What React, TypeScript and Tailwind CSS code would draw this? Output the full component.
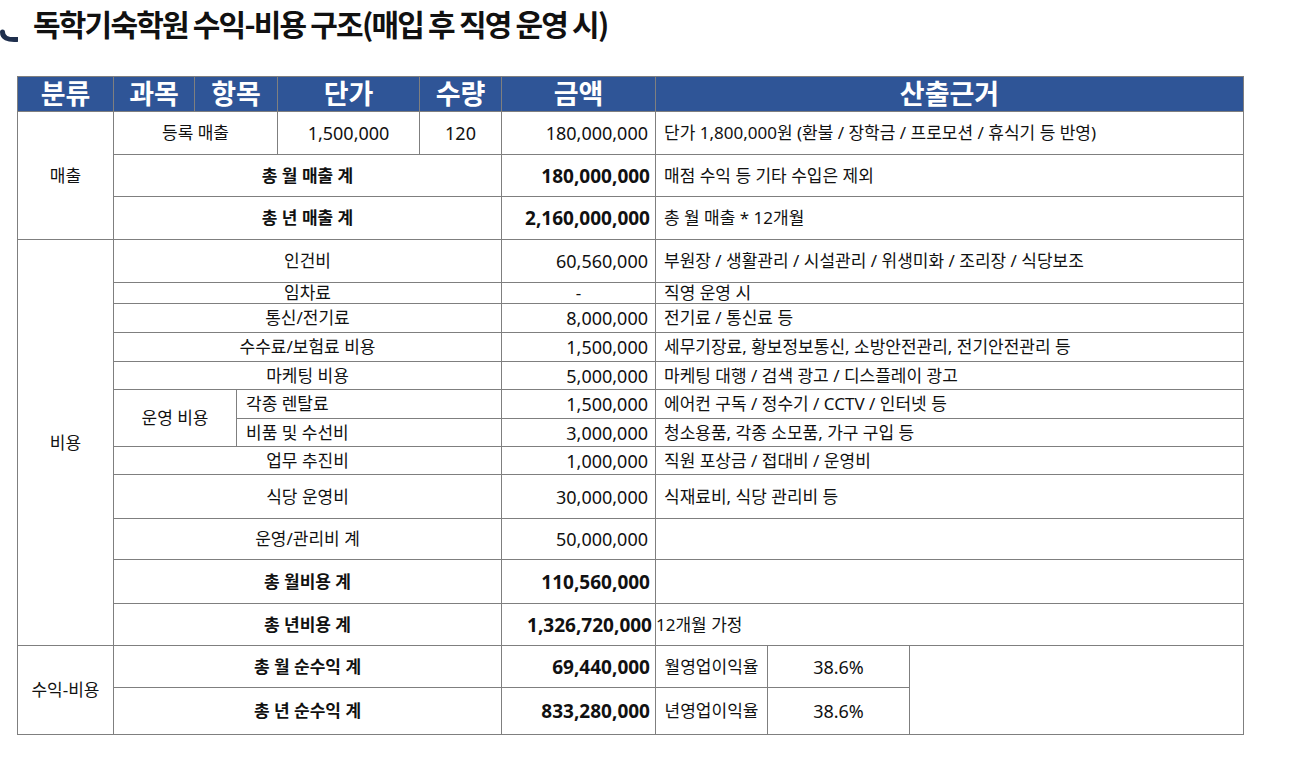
import React from "react";

const cell = "border border-[#7f7f7f] p-0";
const th = "border border-[#7f7f7f] bg-[#2f5597] text-white text-[27px] font-bold leading-[30px] text-center";
const amt = "text-right pr-[7px] text-[18px]";
const bamt = "text-right pr-[5px] text-[19px] font-bold";
const note = "text-left pl-[8px]";

function CostRow({ label, amount, text, h }: { label: string; amount: string; text?: string; h: string }) {
  return (
    <tr className={h}>
      <td colSpan={5} className={`${cell} text-center`}>{label}</td>
      <td className={`${cell} ${amt}`}>{amount}</td>
      <td colSpan={3} className={`${cell} ${note}`}>{text}</td>
    </tr>
  );
}

export default function App() {
  return (
    <div className="w-[1306px] h-[769px] bg-white overflow-hidden text-[#111] font-['Noto_Sans','Noto_Sans_CJK_KR',sans-serif]">
      {/* title */}
      <div className="h-[76px] flex items-start">
        <svg width="18" height="46" viewBox="0 0 18 46" className="shrink-0">
          <path d="M2.5 32 Q2.5 40.5 17 39.5" fill="none" stroke="#1f2f4d" strokeWidth="5" strokeLinecap="round" />
        </svg>
        <h1 className="ml-[15px] mt-[5px] text-[30px] leading-[36px] font-bold tracking-[-1.8px] text-[#111] font-['Noto_Sans_CJK_KR',sans-serif]">
          독학기숙학원 수익-비용 구조(매입 후 직영 운영 시)
        </h1>
      </div>

      <div className="pl-[17px]">
        <table className="border-collapse table-fixed w-[1226px] text-[17px] leading-[20px]">
          <colgroup>
            <col className="w-[96px]" />
            <col className="w-[81px]" />
            <col className="w-[42px]" />
            <col className="w-[41px]" />
            <col className="w-[142px]" />
            <col className="w-[82px]" />
            <col className="w-[154px]" />
            <col className="w-[112px]" />
            <col className="w-[142px]" />
            <col className="w-[334px]" />
          </colgroup>
          <thead>
            <tr className="h-[35px]">
              <th className={th}>분류</th>
              <th className={th}>과목</th>
              <th colSpan={2} className={th}>항목</th>
              <th className={th}>단가</th>
              <th className={th}>수량</th>
              <th className={th}>금액</th>
              <th colSpan={3} className={th}>산출근거</th>
            </tr>
          </thead>
          <tbody>
            {/* 매출 */}
            <tr className="h-[43px]">
              <td rowSpan={3} className={`${cell} text-center`}>매출</td>
              <td colSpan={3} className={`${cell} text-center`}>등록 매출</td>
              <td className={`${cell} text-center text-[18px]`}>1,500,000</td>
              <td className={`${cell} text-center text-[18px]`}>120</td>
              <td className={`${cell} ${amt}`}>180,000,000</td>
              <td colSpan={3} className={`${cell} ${note}`}>단가 1,800,000원 (환불 / 장학금 / 프로모션 / 휴식기 등 반영)</td>
            </tr>
            <tr className="h-[42px]">
              <td colSpan={5} className={`${cell} text-center font-bold`}>총 월 매출 계</td>
              <td className={`${cell} ${bamt}`}>180,000,000</td>
              <td colSpan={3} className={`${cell} ${note}`}>매점 수익 등 기타 수입은 제외</td>
            </tr>
            <tr className="h-[43px]">
              <td colSpan={5} className={`${cell} text-center font-bold`}>총 년 매출 계</td>
              <td className={`${cell} ${bamt}`}>2,160,000,000</td>
              <td colSpan={3} className={`${cell} ${note}`}>총 월 매출 * 12개월</td>
            </tr>

            {/* 비용 */}
            <tr className="h-[43px]">
              <td rowSpan={12} className={`${cell} text-center`}>비용</td>
              <td colSpan={5} className={`${cell} text-center`}>인건비</td>
              <td className={`${cell} ${amt}`}>60,560,000</td>
              <td colSpan={3} className={`${cell} ${note}`}>부원장 / 생활관리 / 시설관리 / 위생미화 / 조리장 / 식당보조</td>
            </tr>
            <tr className="h-[21px]">
              <td colSpan={5} className={`${cell} text-center`}>임차료</td>
              <td className={`${cell} text-center`}>-</td>
              <td colSpan={3} className={`${cell} ${note}`}>직영 운영 시</td>
            </tr>
            <CostRow h="h-[29px]" label="통신/전기료" amount="8,000,000" text="전기료 / 통신료 등" />
            <CostRow h="h-[29px]" label="수수료/보험료 비용" amount="1,500,000" text="세무기장료, 황보정보통신, 소방안전관리, 전기안전관리 등" />
            <CostRow h="h-[28px]" label="마케팅 비용" amount="5,000,000" text="마케팅 대행 / 검색 광고 / 디스플레이 광고" />
            <tr className="h-[29px]">
              <td colSpan={2} rowSpan={2} className={`${cell} text-center`}>운영 비용</td>
              <td colSpan={3} className={`${cell} text-left pl-[9px]`}>각종 렌탈료</td>
              <td className={`${cell} ${amt}`}>1,500,000</td>
              <td colSpan={3} className={`${cell} ${note}`}>에어컨 구독 / 정수기 / CCTV / 인터넷 등</td>
            </tr>
            <tr className="h-[28px]">
              <td colSpan={3} className={`${cell} text-left pl-[9px]`}>비품 및 수선비</td>
              <td className={`${cell} ${amt}`}>3,000,000</td>
              <td colSpan={3} className={`${cell} ${note}`}>청소용품, 각종 소모품, 가구 구입 등</td>
            </tr>
            <CostRow h="h-[28px]" label="업무 추진비" amount="1,000,000" text="직원 포상금 / 접대비 / 운영비" />
            <CostRow h="h-[44px]" label="식당 운영비" amount="30,000,000" text="식재료비, 식당 관리비 등" />
            <CostRow h="h-[41px]" label="운영/관리비 계" amount="50,000,000" />
            <tr className="h-[44px]">
              <td colSpan={5} className={`${cell} text-center font-bold`}>총 월비용 계</td>
              <td className={`${cell} ${bamt}`}>110,560,000</td>
              <td colSpan={3} className={`${cell} ${note}`}></td>
            </tr>
            <tr className="h-[42px]">
              <td colSpan={5} className={`${cell} text-center font-bold`}>총 년비용 계</td>
              <td className={`${cell} text-right pr-[3px] text-[19px] font-bold whitespace-nowrap`}>1,326,720,000</td>
              <td colSpan={3} className={`${cell} text-left pl-0`}>12개월 가정</td>
            </tr>

            {/* 수익-비용 */}
            <tr className="h-[42px]">
              <td rowSpan={2} className={`${cell} text-center`}>수익-비용</td>
              <td colSpan={5} className={`${cell} text-center font-bold`}>총 월 순수익 계</td>
              <td className={`${cell} ${bamt}`}>69,440,000</td>
              <td className={`${cell} text-center`}>월영업이익율</td>
              <td className={`${cell} text-center text-[18px]`}>38.6%</td>
              <td rowSpan={2} className={cell}></td>
            </tr>
            <tr className="h-[47px]">
              <td colSpan={5} className={`${cell} text-center font-bold`}>총 년 순수익 계</td>
              <td className={`${cell} ${bamt}`}>833,280,000</td>
              <td className={`${cell} text-center`}>년영업이익율</td>
              <td className={`${cell} text-center text-[18px]`}>38.6%</td>
            </tr>
          </tbody>
        </table>
      </div>
    </div>
  );
}
